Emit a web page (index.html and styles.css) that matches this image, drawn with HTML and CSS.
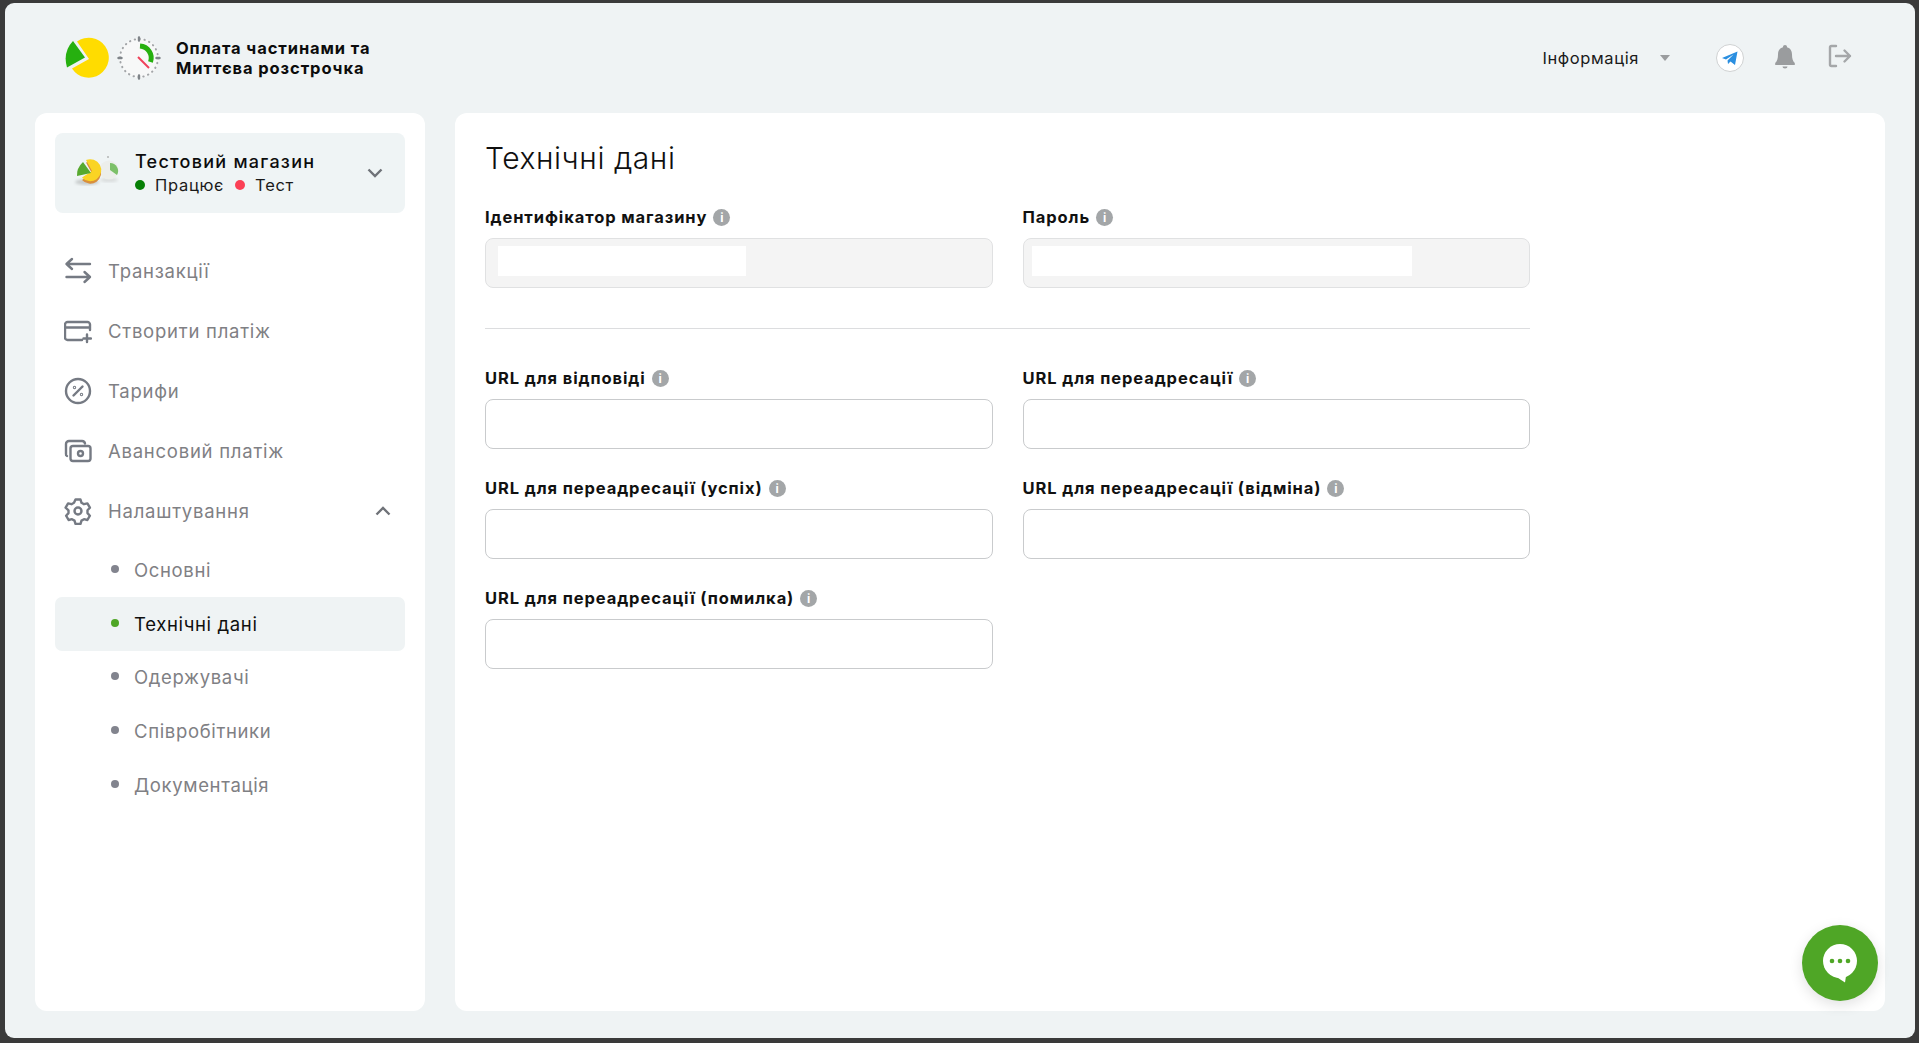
FILE: index.html
```html
<!DOCTYPE html>
<html lang="uk">
<head>
<meta charset="utf-8">
<title>Технічні дані</title>
<link rel="stylesheet" href="styles.css">
</head>
<body>
<div class="window">
  <header class="topbar">
    <div class="brand">
      <svg class="brand-pie" width="46" height="42" viewBox="0 0 46 42">
        <path d="M13 4.500A20 20 0 1 1 8 31.500L25 22Z" fill="#ffdc00"/>
        <path d="M9 4L21 20.500L3 30.500Q-1.500 15 9 4Z" fill="#26b00f"/>
      </svg>
      <svg class="brand-clock" width="44" height="44" viewBox="0 0 44 44">
        <circle cx="22" cy="22" r="20" fill="#f7f8f8"/>
        <circle cx="22" cy="22" r="19" fill="none" stroke="#a2a5a8" stroke-width="2" stroke-dasharray=".4 4.574" stroke-linecap="round"/>
        <path d="M22 1.500V4.500M22 39.500V42.500M1.500 22H4.500M39.500 22H42.500" stroke="#7f8489" stroke-width="2.400" stroke-linecap="round"/>
        <path d="M23 10A12 12 0 0 1 33.500 26" fill="none" stroke="#26b00f" stroke-width="5"/>
        <path d="M21 21L32 32" stroke="#f0415a" stroke-width="2"/>
      </svg>
      <div class="brand-name">Оплата частинами та<br>Миттєва розстрочка</div>
    </div>
    <nav class="top-actions">
      <div class="info-menu"><span>Інформація</span><i class="caret"></i></div>
      <svg class="tg" width="30" height="30" viewBox="0 0 30 30">
        <circle cx="15" cy="15" r="13.500" fill="#fff" stroke="#cfd1d2" stroke-width="1"/>
        <path d="M7 15L22.500 8.500L20 22L15.500 18.500L13 21L12.500 17.500L18.500 11.500L11 16.500Z" fill="#2b8fe0"/>
      </svg>
      <svg class="bell" width="22" height="26" viewBox="0 0 22 26">
        <path d="M11 1a2 2 0 0 1 2 2.200C16.500 4 18 7 18 10.500c0 4 .8 6.500 2.800 8.500v2H1.200v-2C3.200 17 4 14.500 4 10.500 4 7 5.500 4 9 3.200A2 2 0 0 1 11 1Z" fill="#9a9c9e"/>
        <path d="M8.500 22.500h5a2.500 2 0 0 1-5 0Z" fill="#9a9c9e"/>
      </svg>
      <svg class="logout" width="24" height="24" viewBox="0 0 24 24" fill="none" stroke="#a5a7a9" stroke-width="2.400" stroke-linecap="round" stroke-linejoin="round">
        <path d="M8 2H3.500A1.500 1.500 0 0 0 2 3.500v17A1.500 1.500 0 0 0 3.500 22H8"/>
        <path d="M8 12H22M16.500 6.500L22 12L16.500 17.500"/>
      </svg>
    </nav>
  </header>

  <div class="content">
    <aside class="sidebar">
      <div class="shop">
        <svg class="shop-logo" width="46" height="36" viewBox="0 0 46 36">
          <defs><filter id="soft"><feGaussianBlur stdDeviation="1.500"/></filter></defs>
          <ellipse cx="14" cy="27" rx="12" ry="3" fill="#c6caca" filter="url(#soft)"/>
          <ellipse cx="36" cy="25" rx="9" ry="2" fill="#d8dbdb" filter="url(#soft)"/>
          <circle cx="36" cy="15" r="9.500" fill="#eceeeb"/>
          <path d="M37 8a8 8 0 0 1 7 12l-7-5Z" fill="#7cc069"/>
          <circle cx="35" cy="2" r=".800" fill="#888"/>
          <path d="M13 6A11 11 0 1 1 9 23.500L19 17Z" fill="#d98f3c" transform="translate(0 1.500)"/>
          <path d="M13 5A11 11 0 1 1 9 22.500L19 16Z" fill="#fad424"/>
          <path d="M10 7L18 18L4 21Q3.500 13 10 7Z" fill="#57a92f"/>
        </svg>
        <div class="shop-info">
          <div class="shop-name">Тестовий магазин</div>
          <div class="shop-status">
            <i class="dot dot-green"></i><span>Працює</span>
            <i class="dot dot-red"></i><span>Тест</span>
          </div>
        </div>
        <svg class="chev" width="16" height="10" viewBox="0 0 16 10" fill="none" stroke="#6f7278" stroke-width="2.400"><path d="M1.500 1.500L8 8L14.500 1.500"/></svg>
      </div>

      <ul class="menu">
        <li class="menu-item">
          <svg class="menu-icon" width="28" height="28" viewBox="0 0 28 28" fill="none" stroke="#757a83" stroke-width="2.400" stroke-linecap="round" stroke-linejoin="round"><path d="M2.500 7.500H26M8 2.500L2.500 7.500L8 12.500M2.500 20.500H26M20.500 15.500L26 20.500L20.500 25.500" transform="translate(0 -.5)"/></svg>
          <span>Транзакції</span>
        </li>
        <li class="menu-item">
          <svg class="menu-icon" width="28" height="28" viewBox="0 0 28 28" fill="none" stroke="#757a83" stroke-width="2.400" stroke-linecap="round" stroke-linejoin="round"><path d="M26 13V7.500A2.500 2.500 0 0 0 23.500 5H3.500A2.500 2.500 0 0 0 1 7.500V20.500A2.500 2.500 0 0 0 3.500 23H18M1 10.500H26M23 17.500V25M19.500 21.500H27"/></svg>
          <span>Створити платіж</span>
        </li>
        <li class="menu-item">
          <svg class="menu-icon" width="28" height="28" viewBox="0 0 28 28" fill="none" stroke="#757a83" stroke-width="2.400" stroke-linecap="round"><circle cx="14" cy="14" r="12"/><path d="M18.500 9.500L9.500 18.500"/><circle cx="10.500" cy="10.500" r=".500"/><circle cx="17.500" cy="17.500" r=".500"/></svg>
          <span>Тарифи</span>
        </li>
        <li class="menu-item">
          <svg class="menu-icon" width="28" height="28" viewBox="0 0 28 28" fill="none" stroke="#757a83" stroke-width="2.400" stroke-linecap="round" stroke-linejoin="round"><rect x="6.500" y="9" width="20" height="15" rx="2.500"/><path d="M3 19A1.800 1.800 0 0 1 2 17V7A3 3 0 0 1 5 4H18A3 3 0 0 1 21 6.500"/><circle cx="16.500" cy="16.500" r="2.500"/></svg>
          <span>Авансовий платіж</span>
        </li>
        <li class="menu-item">
          <svg class="menu-icon" width="28" height="28" viewBox="0 0 28 28" fill="none" stroke="#757a83" stroke-width="2.400" stroke-linejoin="round"><path d="M11.500 2.500h5l1 3.300 2.500 1.400 3.400-.8 2.500 4.300-2.400 2.600v2.800l2.400 2.600-2.500 4.300-3.400-.8-2.500 1.400-1 3.300h-5l-1-3.300-2.500-1.400-3.400.8-2.500-4.300 2.400-2.600v-2.800L1.600 10.700l2.500-4.300 3.400.8L10 5.800Z"/><circle cx="14" cy="14" r="3.500"/></svg>
          <span>Налаштування</span>
          <svg class="chev chev-up" width="16" height="10" viewBox="0 0 16 10" fill="none" stroke="#6f7278" stroke-width="2.400"><path d="M1.500 8.500L8 2L14.500 8.500"/></svg>
        </li>
      </ul>
      <ul class="submenu">
        <li class="sub-item"><i class="bullet"></i>Основні</li>
        <li class="sub-item sub-active"><i class="bullet"></i>Технічні дані</li>
        <li class="sub-item"><i class="bullet"></i>Одержувачі</li>
        <li class="sub-item"><i class="bullet"></i>Співробітники</li>
        <li class="sub-item"><i class="bullet"></i>Документація</li>
      </ul>
    </aside>

    <main class="panel">
      <h1 class="title">Технічні дані</h1>
      <div class="form-grid">
        <div class="field">
          <label class="label">Ідентифікатор магазину<i class="hint">i</i></label>
          <div class="input input-disabled"><span class="mask mask-id"></span></div>
        </div>
        <div class="field">
          <label class="label">Пароль<i class="hint">i</i></label>
          <div class="input input-disabled"><span class="mask mask-pass"></span></div>
        </div>
      </div>
      <hr class="divider">
      <div class="form-grid">
        <div class="field">
          <label class="label">URL для відповіді<i class="hint">i</i></label>
          <div class="input"></div>
        </div>
        <div class="field">
          <label class="label">URL для переадресації<i class="hint">i</i></label>
          <div class="input"></div>
        </div>
        <div class="field">
          <label class="label">URL для переадресації (успіх)<i class="hint">i</i></label>
          <div class="input"></div>
        </div>
        <div class="field">
          <label class="label">URL для переадресації (відміна)<i class="hint">i</i></label>
          <div class="input"></div>
        </div>
        <div class="field">
          <label class="label">URL для переадресації (помилка)<i class="hint">i</i></label>
          <div class="input"></div>
        </div>
      </div>
    </main>
  </div>

  <button class="chat" type="button" aria-label="Чат">
    <svg width="36" height="40" viewBox="0 0 36 40">
      <circle cx="18" cy="18" r="17" fill="#fff"/>
      <path d="M13 33L23 39.500L24 33Z" fill="#fff"/>
      <circle cx="10" cy="18" r="2.300" fill="#4fa626"/><circle cx="18" cy="18" r="2.300" fill="#4fa626"/><circle cx="26" cy="18" r="2.300" fill="#4fa626"/>
    </svg>
  </button>
</div>
</body>
</html>
```
FILE: styles.css
```css
* { box-sizing: border-box; }
html, body { height: 100%; margin: 0; }
body {
  background: #3a3a3a;
  padding: 3px 4px 5px 5px;
  font-family: "Inter", "Noto Sans", sans-serif;
  color: #111;
}
.window {
  position: relative;
  height: 100%;
  background: #eff3f4;
  border-radius: 9px;
  display: flex;
  flex-direction: column;
  overflow: hidden;
}
.topbar {
  height: 110px;
  flex: none;
  display: flex;
  align-items: center;
  justify-content: space-between;
  padding: 0 63px 0 59px;
}
.brand { display: flex; align-items: center; }
.brand-pie { margin-right: 7px; }
.brand-clock { margin-right: 15px; }
.brand-name { font-size: 16.5px; font-weight: 700; line-height: 20px; color: #0c0c0c; letter-spacing: .9px; white-space: nowrap; margin-bottom: 1px; }
.top-actions { display: flex; align-items: center; }
.info-menu { display: flex; align-items: center; font-size: 16.5px; letter-spacing: .6px; color: #1a1a1a; margin: 0 45px 1px 0; }
.caret { width: 0; height: 0; border: 5px solid transparent; border-top: 6px solid #9a9c9e; border-bottom: 0; margin-left: 21px; }
.tg { margin-right: 29px; }
.bell { margin: 0 32px 3px 0; }
.logout { margin-bottom: 4px; }

.content { flex: 1; min-height: 0; display: flex; gap: 30px; padding: 0 30px 27px; }
.sidebar { width: 390px; flex: none; background: #fff; border-radius: 12px; padding: 20px; }
.shop { height: 80px; background: #eff4f5; border-radius: 8px; display: flex; align-items: center; padding: 0 22px 0 18px; }
.shop-logo { margin-right: 16px; flex: none; }
.shop-info { flex: 1; }
.shop-name { font-size: 18px; font-weight: 500; line-height: 24px; color: #0c0c0c; letter-spacing: 1.25px; }
.shop-status { display: flex; align-items: center; font-size: 16.5px; letter-spacing: .7px; line-height: 22px; color: #1a1a1a; }
.dot { width: 10px; height: 10px; border-radius: 50%; margin-right: 10px; }
.dot-green { background: #068006; }
.dot-red { background: #fb4055; margin-left: 11px; }
.chev { flex: none; }

.menu, .submenu { list-style: none; margin: 0; padding: 0; }
.menu { margin-top: 28px; }
.menu-item { height: 60px; display: flex; align-items: center; font-size: 18.5px; letter-spacing: .75px; color: #7f8084; padding-left: 9px; }
.menu-icon { margin-right: 16px; flex: none; }
.chev-up { margin-left: auto; margin-right: 14px; }
.submenu { margin-top: 2px; }
.sub-item { height: 53.75px; display: flex; align-items: center; font-size: 18.5px; letter-spacing: .65px; color: #7f8084; padding-left: 56px; border-radius: 7px; }
.sub-item.sub-active { background: #eff3f4; color: #0f0f0f; }
.bullet { width: 8px; height: 8px; border-radius: 50%; background: #82848e; margin: 0 15px 2px 0; }
.sub-active .bullet { background: #4fa626; }

.panel { flex: 1; background: #fff; border-radius: 12px; padding: 25px 30px 26px; }
.title { margin: 0 0 29px; font-size: 30px; letter-spacing: .55px; font-weight: 300; line-height: 40px; color: #0f0f0f; }
.form-grid { width: 1045px; display: grid; grid-template-columns: 1fr 1fr; gap: 29px 30px; }
.field { display: flex; flex-direction: column; }
.label { display: flex; align-items: center; height: 20px; margin-bottom: 11px; font-size: 16.5px; font-weight: 700; letter-spacing: .9px; color: #111; gap: 6px; white-space: nowrap; }
.hint { width: 17px; height: 17px; border-radius: 50%; background: #a3a6a8; color: #fff; font-size: 12px; font-style: normal; font-weight: 700; line-height: 17px; letter-spacing: 0; text-align: center; }
.input { height: 50px; border: 1px solid #c9cbcd; border-radius: 8px; background: #fff; padding: 7px 12px; }
.input-disabled { background: #f4f4f4; border-color: #e0e1e2; }
.mask { display: block; height: 30px; background: #fff; }
.mask-id { width: 248px; }
.mask-pass { width: 380px; margin-left: -4px; }
.divider { width: 1045px; height: 1px; margin: 40px 0 39px; border: 0; background: #dcdddf; }

.chat {
  position: absolute;
  right: 37px;
  bottom: 37px;
  width: 76px;
  height: 76px;
  padding: 0;
  border: 0;
  border-radius: 50%;
  background: #4fa626;
  box-shadow: 0 4px 14px rgba(0, 0, 0, .12);
  display: flex;
  align-items: center;
  justify-content: center;
}
```
